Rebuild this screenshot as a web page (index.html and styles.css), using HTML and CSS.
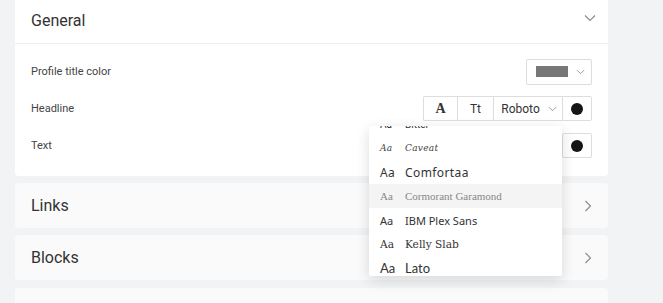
FILE: index.html
```html
<!DOCTYPE html>
<html lang="en">
<head>
  <meta charset="UTF-8" />
  <title>Profile appearance</title>
  <link rel="stylesheet" href="styles.css">
</head>
<body>
  <div class="page">
    <!-- General -->
    <section class="card card-open">
      <header class="card-head">
        <h2>General</h2>
        <svg class="chev" width="12" height="8" viewBox="0 0 12 8"><path d="M1 1.5l5 5 5-5" fill="none" stroke="#8a8a8a" stroke-width="1.1"/></svg>
      </header>
      <div class="card-body">
        <div class="row">
          <span class="label">Profile title color</span>
          <button class="color-pick">
            <span class="swatch"></span>
            <svg width="9" height="6" viewBox="0 0 9 6"><path d="M1 1.2l3.5 3.5 3.5-3.5" fill="none" stroke="#999" stroke-width="1"/></svg>
          </button>
        </div>
        <div class="row">
          <span class="label">Headline</span>
          <div class="controls">
            <div class="btn-group">
              <button class="btn btn-a">A</button>
              <button class="btn btn-tt">Tt</button>
              <button class="btn btn-font">Roboto
                <svg width="9" height="6" viewBox="0 0 9 6"><path d="M1 1.2l3.5 3.5 3.5-3.5" fill="none" stroke="#999" stroke-width="1"/></svg>
              </button>
            </div>
            <button class="dot-btn"><span class="dot"></span></button>

            <div class="font-menu">
              <ul class="font-list">
                <li class="f-first"><span class="aa">Aa</span><span class="name">Bitter</span></li>
                <li class="f-caveat"><span class="aa">Aa</span><span class="name">Caveat</span></li>
                <li class="f-comfortaa"><span class="aa">Aa</span><span class="name">Comfortaa</span></li>
                <li class="f-cormorant active"><span class="aa">Aa</span><span class="name">Cormorant Garamond</span></li>
                <li class="f-plex"><span class="aa">Aa</span><span class="name">IBM Plex Sans</span></li>
                <li class="f-kelly"><span class="aa">Aa</span><span class="name">Kelly Slab</span></li>
                <li class="f-lato"><span class="aa">Aa</span><span class="name">Lato</span></li>
              </ul>
            </div>
          </div>
        </div>
        <div class="row">
          <span class="label">Text</span>
          <div class="controls">
            <button class="dot-btn"><span class="dot"></span></button>
          </div>
        </div>
      </div>
    </section>

    <section class="card">
      <header class="card-head">
        <h2>Links</h2>
        <svg class="chev" width="8" height="12" viewBox="0 0 8 12"><path d="M1.5 1l5 5-5 5" fill="none" stroke="#8a8a8a" stroke-width="1.1"/></svg>
      </header>
    </section>

    <section class="card">
      <header class="card-head">
        <h2>Blocks</h2>
        <svg class="chev" width="8" height="12" viewBox="0 0 8 12"><path d="M1.5 1l5 5-5 5" fill="none" stroke="#8a8a8a" stroke-width="1.1"/></svg>
      </header>
    </section>

    <section class="card card-last">
      <header class="card-head">
        <span></span>
        <svg class="chev" width="8" height="12" viewBox="0 0 8 12"><path d="M1.5 1l5 5-5 5" fill="none" stroke="#8a8a8a" stroke-width="1.1"/></svg>
      </header>
    </section>
  </div>
</body>
</html>
```

FILE: styles.css
```css
body {
  margin: 0;
  background-color: #f2f3f5;
  font-family: Roboto, 'Liberation Sans', sans-serif;
  color: #333;
  overflow: hidden;
}

.page {
  padding: 0 55px 0 15px;
  margin-top: -2px;
  display: flex;
  flex-direction: column;
  gap: 7px;
}

.card {
  background-color: #fafafa;
  border-radius: 4px;
}

.card-open {
  background-color: #fff;
}

.card-last {
  margin-top: 1px;
}

.card-head {
  height: 45px;
  padding: 0 16px;
  display: flex;
  align-items: center;
  justify-content: space-between;
}

.card-open .card-head {
  border-bottom: 1px solid #eeeeee;
}

.card-head h2 {
  margin: 0;
  font-size: 16px;
  font-weight: 400;
  color: #333;
}

.card-open .chev {
  margin-right: -4px;
  margin-bottom: 6px;
}

.card-body {
  padding: 15px 16px 18px;
  display: flex;
  flex-direction: column;
  gap: 12px;
}

.row {
  height: 25px;
  display: flex;
  align-items: center;
  justify-content: space-between;
}

.label {
  font-size: 11px;
  color: #444;
}

button {
  font-family: inherit;
  background: #fff;
  border: 1px solid #dddddd;
  margin: 0;
  padding: 0;
  cursor: pointer;
  display: flex;
  align-items: center;
  justify-content: center;
}

.color-pick {
  width: 66px;
  height: 26px;
  border-radius: 2px;
  gap: 8px;
  padding-left: 2px;
}

.swatch {
  width: 32px;
  height: 11px;
  background-color: #777;
}

.controls {
  position: relative;
  display: flex;
  align-items: center;
}

.btn-group {
  display: flex;
}

.btn {
  height: 25px;
  border-right: none;
  color: #333;
}

.btn-a {
  width: 34px;
  border-radius: 2px 0 0 2px;
  font-family: 'Liberation Serif', serif;
  font-weight: 700;
  font-size: 14px;
}

.btn-tt {
  width: 36px;
  font-size: 12px;
}

.btn-font {
  width: 69px;
  font-size: 12px;
  gap: 8px;
  padding-left: 2px;
}

.dot-btn {
  width: 30px;
  height: 25px;
  border-radius: 0 2px 2px 0;
}

.controls > .dot-btn:only-child {
  border-radius: 2px;
}

.dot {
  width: 12px;
  height: 12px;
  border-radius: 50%;
  background-color: #151515;
}

/* font dropdown */
.font-menu {
  position: absolute;
  top: calc(100% + 5px);
  right: 30px;
  width: 193px;
  height: 150px;
  background: #fff;
  border-radius: 2px;
  box-shadow: 0 4px 14px rgba(0, 0, 0, 0.14);
  overflow: hidden;
  z-index: 5;
}

.font-list {
  list-style: none;
  margin: -14px 0 0;
  padding: 0;
}

.font-list li {
  height: 24px;
  display: flex;
  align-items: center;
  padding-left: 11px;
  font-size: 12px;
  color: #333;
}

.font-list .aa {
  width: 25px;
}

.font-list li.active {
  background-color: #f4f4f4;
  color: #888;
}

.f-first {
  font-size: 10px;
  color: #777;
}

.f-first span {
  font-size: 10px;
}

.f-caveat {
  font-family: 'DejaVu Serif', serif;
  font-style: italic;
}

.f-caveat span {
  font-size: 9px;
  letter-spacing: 0.3px;
  color: #444;
}

.f-comfortaa {
  font-family: 'Noto Sans', sans-serif;
  letter-spacing: 0.4px;
}

.f-cormorant {
  font-family: 'Liberation Serif', serif;
}

.f-cormorant span {
  font-size: 11px;
}

.f-plex {
  font-family: 'Noto Sans', sans-serif;
}

.f-plex span {
  font-size: 11px;
}

.f-kelly {
  font-family: 'DejaVu Serif Condensed', 'DejaVu Serif', serif;
}

.f-kelly span {
  font-size: 11.8px;
}

.f-lato {
  font-family: Lato, sans-serif;
}

.f-lato span {
  font-size: 13px;
}
```
